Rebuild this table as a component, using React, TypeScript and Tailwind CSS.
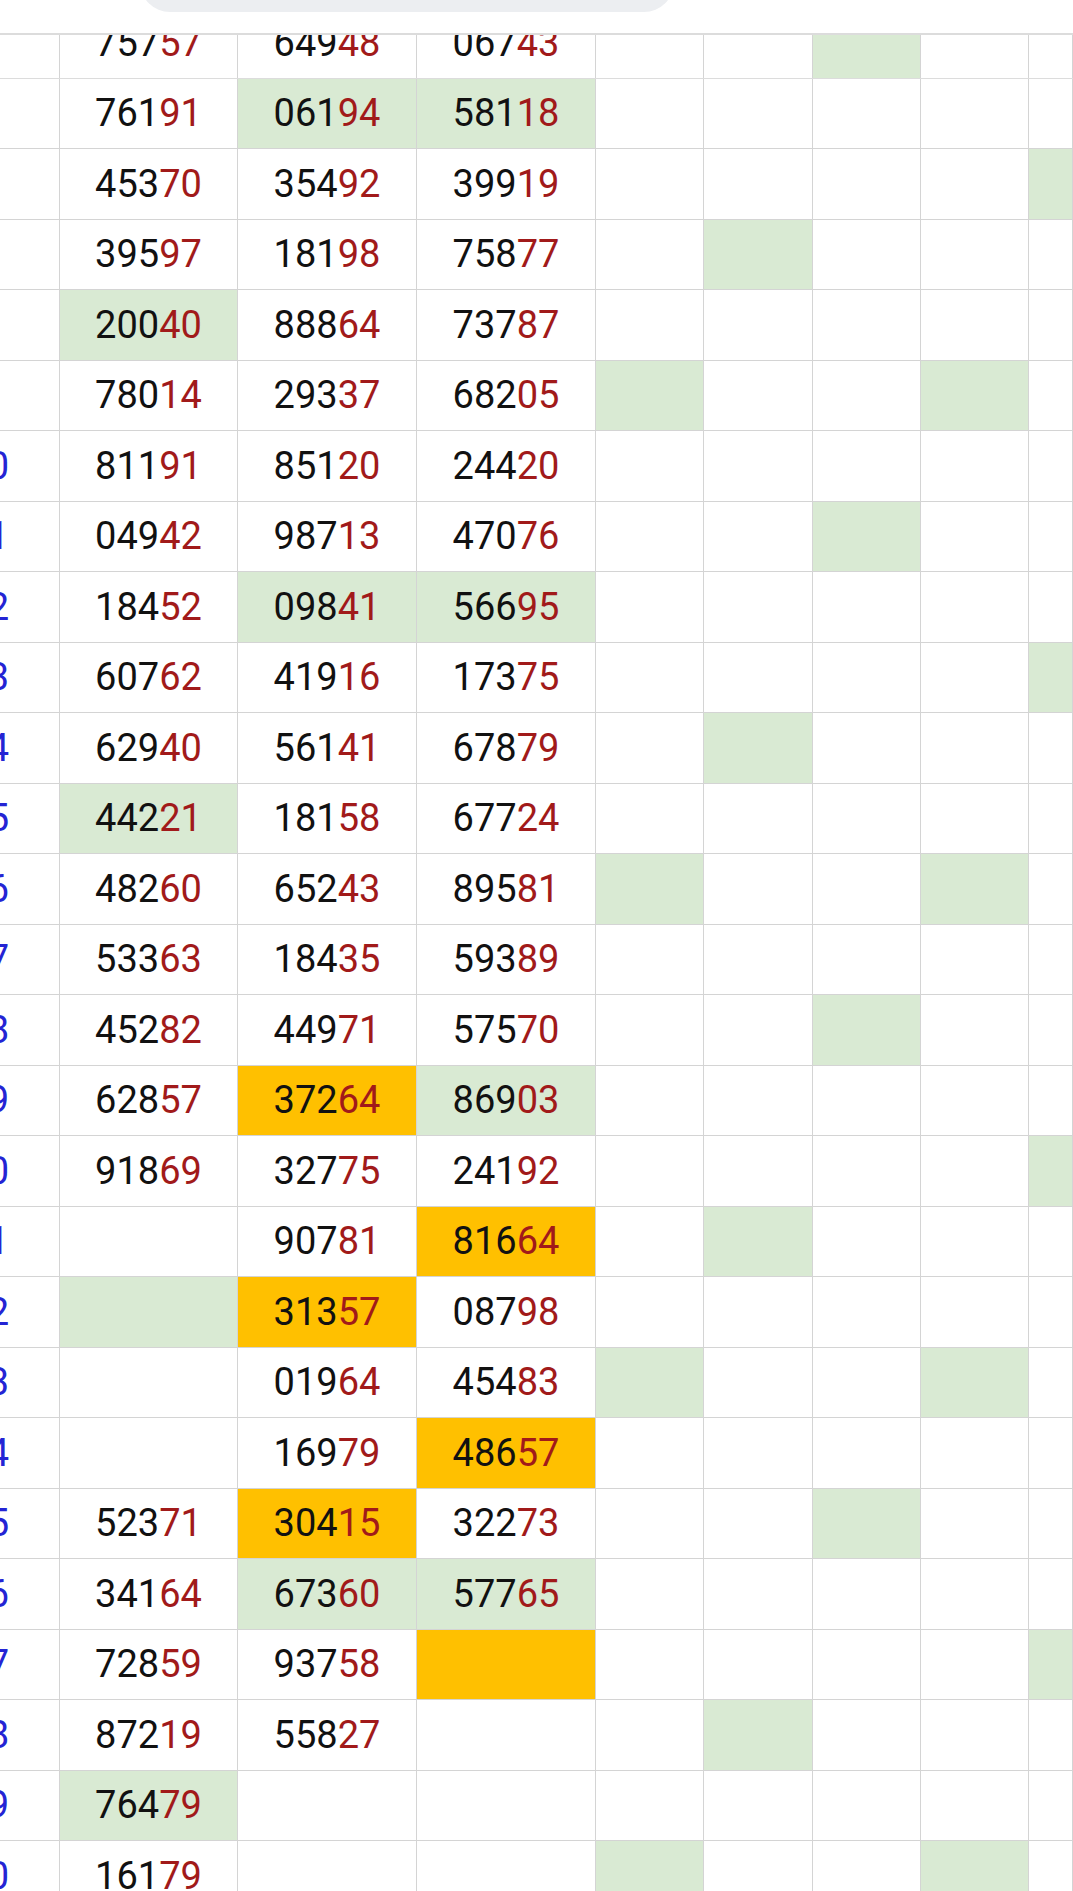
import React from "react";

type Row = { label?: string; v: [string, string, string]; f: string };

// f: fill per column 1..8 — "." white, "g" light green, "o" amber
const rows: Row[] = [
  { v: ["75757", "64948", "06743"], f: ".....g.." },
  { v: ["76191", "06194", "58118"], f: ".gg....." },
  { v: ["45370", "35492", "39919"], f: ".......g" },
  { v: ["39597", "18198", "75877"], f: "....g..." },
  { v: ["20040", "88864", "73787"], f: "g......." },
  { v: ["78014", "29337", "68205"], f: "...g..g." },
  { label: "20", v: ["81191", "85120", "24420"], f: "........" },
  { label: "21", v: ["04942", "98713", "47076"], f: ".....g.." },
  { label: "22", v: ["18452", "09841", "56695"], f: ".gg....." },
  { label: "23", v: ["60762", "41916", "17375"], f: ".......g" },
  { label: "24", v: ["62940", "56141", "67879"], f: "....g..." },
  { label: "25", v: ["44221", "18158", "67724"], f: "g......." },
  { label: "26", v: ["48260", "65243", "89581"], f: "...g..g." },
  { label: "27", v: ["53363", "18435", "59389"], f: "........" },
  { label: "28", v: ["45282", "44971", "57570"], f: ".....g.." },
  { label: "29", v: ["62857", "37264", "86903"], f: ".og....." },
  { label: "30", v: ["91869", "32775", "24192"], f: ".......g" },
  { label: "31", v: ["", "90781", "81664"], f: "..o.g..." },
  { label: "32", v: ["", "31357", "08798"], f: "go......" },
  { label: "33", v: ["", "01964", "45483"], f: "...g..g." },
  { label: "34", v: ["", "16979", "48657"], f: "..o....." },
  { label: "35", v: ["52371", "30415", "32273"], f: ".o...g.." },
  { label: "36", v: ["34164", "67360", "57765"], f: ".gg....." },
  { label: "37", v: ["72859", "93758", ""], f: "..o....g" },
  { label: "38", v: ["87219", "55827", ""], f: "....g..." },
  { label: "39", v: ["76479", "", ""], f: "g......." },
  { label: "40", v: ["16179", "", ""], f: "...g..g." },
];

const widths = ["w-[178px]", "w-[179px]", "w-[179px]", "w-[108px]", "w-[109px]", "w-[108px]", "w-[108px]", "flex-1"];

const fillClass = (c: string) =>
  c === "g" ? "bg-[#d9ead3]" : c === "o" ? "bg-[#ffc000]" : "bg-white";

const Num = ({ value }: { value: string }) =>
  value ? (
    <span>
      <span className="text-[#111]">{value.slice(0, 3)}</span>
      <span className="text-[#a11a1a]">{value.slice(3)}</span>
    </span>
  ) : null;

const RowCells = ({ row }: { row: Row }) => (
  <div className="flex h-[69.5px] shrink-0">
    <div className="w-[60px] shrink-0 border-r border-[#d4d4d4] flex items-center justify-end pr-[50px] whitespace-nowrap text-[#2424d4]">
      {row.label}
    </div>
    {widths.map((w, i) => (
      <div
        key={i}
        className={`${w} shrink-0 border-r border-[#d4d4d4] flex items-center justify-center ${fillClass(row.f[i])}`}
      >
        {i < 3 && <Num value={row.v[i]} />}
      </div>
    ))}
  </div>
);

export default function App() {
  const [first, ...rest] = rows;
  return (
    <div
      className="w-[1073px] h-[1891px] overflow-hidden bg-white text-[38px] leading-none"
      style={{ fontFamily: "Roboto, 'Noto Sans', sans-serif" }}
    >
      {/* top toolbar edge */}
      <div className="h-[33px] overflow-hidden">
        <div className="ml-[140px] w-[534px] h-[60px] -mt-[48px] rounded-[30px] bg-[#eceef1]" />
      </div>

      {/* partly scrolled-off first row */}
      <div className="h-[45.5px] border-t-2 border-b border-[#dcdcdc] flex flex-col justify-end overflow-hidden">
        <RowCells row={first} />
      </div>

      {rest.map((row, idx) => (
        <div key={idx} className="border-b border-[#d4d4d4]">
          <RowCells row={row} />
        </div>
      ))}
    </div>
  );
}
